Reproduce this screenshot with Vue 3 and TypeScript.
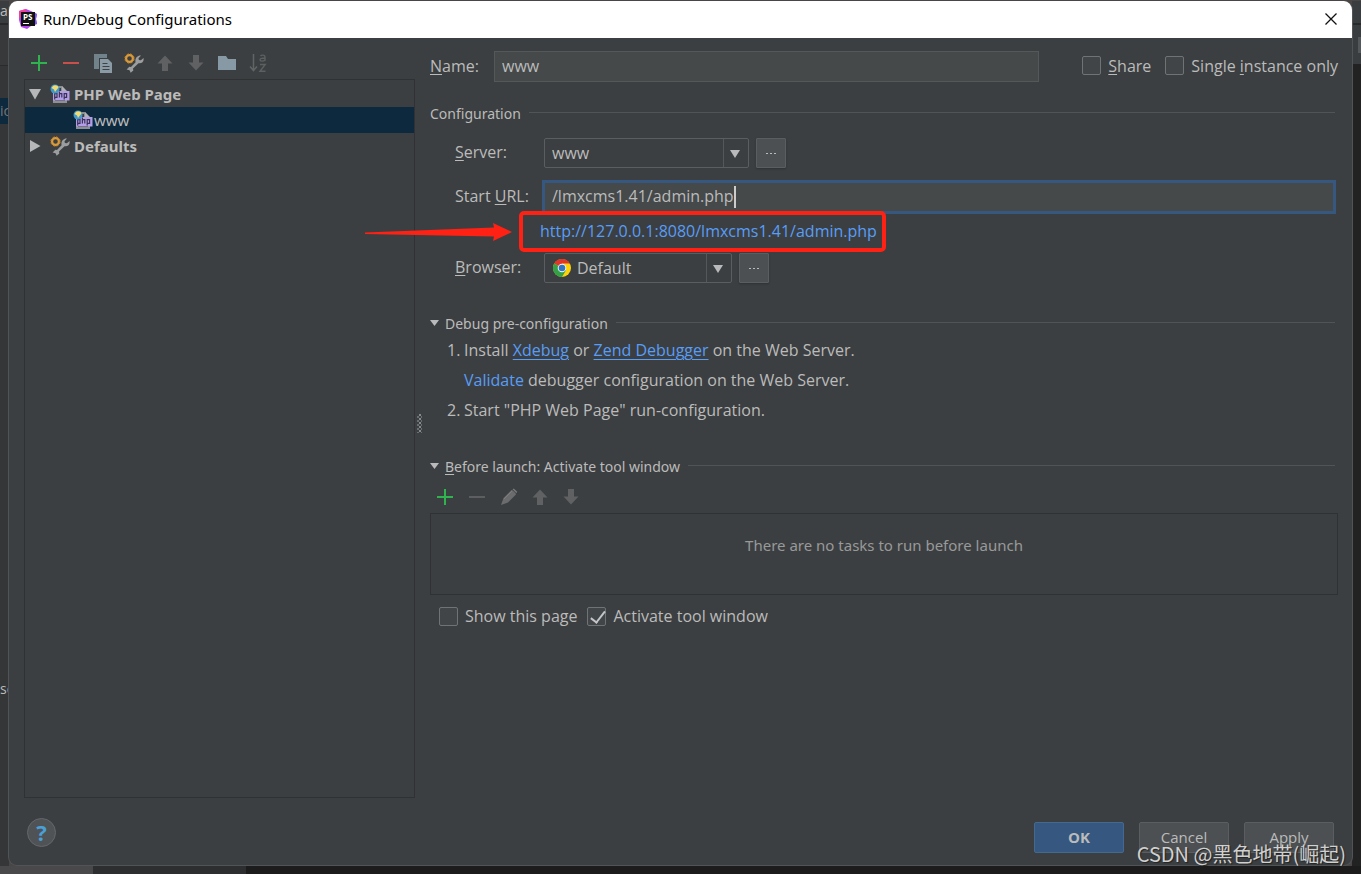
<script setup lang="ts">
import { ref } from 'vue'

type IconName =
  | 'add' | 'remove' | 'copy' | 'settings' | 'up' | 'down' | 'folder' | 'sort' | 'edit'

interface Tool { icon: IconName; label: string; disabled?: boolean }

const treeTools: Tool[] = [
  { icon: 'add', label: 'Add New Configuration' },
  { icon: 'remove', label: 'Remove Configuration' },
  { icon: 'copy', label: 'Copy Configuration' },
  { icon: 'settings', label: 'Edit Defaults' },
  { icon: 'up', label: 'Move Up', disabled: true },
  { icon: 'down', label: 'Move Down', disabled: true },
  { icon: 'folder', label: 'Create New Folder' },
  { icon: 'sort', label: 'Sort Configurations', disabled: true },
]

const taskTools: Tool[] = [
  { icon: 'add', label: 'Add Task' },
  { icon: 'remove', label: 'Remove Task', disabled: true },
  { icon: 'edit', label: 'Edit Task', disabled: true },
  { icon: 'up', label: 'Move Task Up', disabled: true },
  { icon: 'down', label: 'Move Task Down', disabled: true },
]

const name = ref('www')
const startUrl = ref('/lmxcms1.41/admin.php')
const server = ref('www')
const browser = ref('Default')
const share = ref(false)
const single = ref(false)
const showPage = ref(false)
const activate = ref(true)
</script>

<template>
  <svg class="defs" width="0" height="0" aria-hidden="true">
    <symbol id="i-add" viewBox="0 0 20 20">
      <path d="M10 2v16M2 10h16" stroke="#2fb34f" stroke-width="2" fill="none" />
    </symbol>
    <symbol id="i-remove" viewBox="0 0 20 20">
      <path d="M2 10h16" stroke="currentColor" stroke-width="2" />
    </symbol>
    <symbol id="i-copy" viewBox="0 0 20 20">
      <path d="M1 1h13v4H6v11H1z" fill="#71828b" />
      <path d="M7 6h8l4 4v10H7z" fill="#8a9ba5" />
      <path d="M9.500 10.500h5M9.500 13.500h7M9.500 16.500h7" stroke="#3c4245" stroke-width="1" />
    </symbol>
    <symbol id="i-settings" viewBox="0 0 20 20">
      <path d="M17 2.500l-2.500 2.700.4 1.800 2 .3 2.600-2.400c.8 3.500-1.700 6-5 5.300L9 15.500l.3 2-2.600 2.300-1.200-2.600L2.600 16.500 5.300 13.700l1.700.2 4.600-4.700C10.600 5.500 13.500 2 17 2.500z" fill="#9b9d9e" />
      <circle cx="5.500" cy="5.500" r="3.400" fill="none" stroke="#d99a3c" stroke-width="2.200" />
      <circle cx="5.500" cy="5.500" r="4.600" fill="none" stroke="#c98a2e" stroke-width="1" stroke-dasharray="2.400 1.210" />
    </symbol>
    <symbol id="i-up" viewBox="0 0 20 20">
      <path d="M10 2.500l7.500 8H13V18H7v-7.500H2.500z" fill="#5f6162" />
    </symbol>
    <symbol id="i-down" viewBox="0 0 20 20">
      <path d="M10 17.500l7.500-8H13V2H7v7.500H2.500z" fill="#5f6162" />
    </symbol>
    <symbol id="i-folder" viewBox="0 0 20 20">
      <path d="M1 3h8l2 3h8v11H1z" fill="#8799a4" />
    </symbol>
    <symbol id="i-sort" viewBox="0 0 20 20">
      <path d="M5.500 1v16M2 13.500L5.500 17.500 9 13.500" stroke="#616465" stroke-width="1.500" fill="none" />
      <path d="M12.500 3c1-1.300 4.500-1.300 4.500 1v4M17 5c-3 0-5 .3-5 1.800s3.500 2 5 0M12 11.500h5.200L12 18.200h5.500" stroke="#5d6061" stroke-width="1.400" fill="none" />
    </symbol>
    <symbol id="i-edit" viewBox="0 0 20 20">
      <path d="M2 18l2.500-7L12.500 3l1 .2 3.300 3.300.2 1-8 8z" fill="#6a6c6d" />
      <path d="M13.500 2.300l1.300-.8 3.400 3.200-.8 1.600z" fill="#77797a" />
      <path d="M5 12l8-8" stroke="#7c7e7f" />
    </symbol>
    <symbol id="i-php" viewBox="0 0 20 20">
      <path d="M3 2h9l5 5v12H3z" fill="#8d9092" />
      <path d="M5 4h6v4h4v9H5z" fill="#3c3f41" />
      <path d="M12 2l5 5.500h-5z" fill="#b0b2b3" />
      <path d="M3 7h16.500v9.500H3z" fill="#b39ee8" />
      <path d="M4.700 15.500V9.700h2.300v3.600H4.700M9.400 7.500v6M9.400 9.700h2.400v3.800M14.200 15.500V9.700h2.400v3.600h-2.400" fill="none" stroke="#3b3355" stroke-width="1.200" />
      <circle cx="5" cy="5" r="4.500" fill="#3f9ac9" />
      <path d="M3 2c2-1.500 5-.5 5.500 1.500L6.500 6 5 8 4 5.500 1.500 4z" fill="#f1da72" />
    </symbol>
  </svg>

  <div class="screen">
    <div class="backdrop" aria-hidden="true">
      <div class="edge-left">
        <span class="bit top">a</span>
        <span class="bit selected">ic</span>
        <span class="bit low">sc</span>
      </div>
      <div class="edge-right"><span></span></div>
      <div class="edge-bottom"></div>
    </div>

    <main class="dialog">
      <header class="titlebar">
        <svg class="logo" viewBox="0 0 20 20" aria-hidden="true">
          <path d="M1 2l7-2 5 2 6 3-1 5 1 5-6 2-4 3-6-2-2-7z" fill="#b345f1" />
          <path d="M1 2l7-2 2 7-9 2z" fill="#f03e9d" />
          <path d="M14 3l5 2-1 5 1 5-5 1z" fill="#7d5cf5" />
          <rect x="3" y="3" width="14" height="14" fill="#111" />
          <text x="5" y="10.500" class="logo-text">PS</text>
          <path d="M5 14.500h6" stroke="#fff" stroke-width="1.200" />
        </svg>
        <h1>Run/Debug Configurations</h1>
        <button class="close" type="button" aria-label="Close">
          <svg viewBox="0 0 12 12"><path d="M.5.5l11 11M11.500.5l-11 11" stroke="#111" stroke-width="1.300" /></svg>
        </button>
      </header>

      <div class="body">
        <aside class="side">
          <div class="toolbar">
            <button v-for="t in treeTools" :key="t.icon" type="button" class="tool" :class="t.icon" :aria-label="t.label" :disabled="t.disabled">
              <svg><use :href="'#i-' + t.icon" /></svg>
            </button>
          </div>
          <ul class="tree">
            <li class="node group">
              <svg class="twisty" viewBox="0 0 12 12"><path d="M0 1h12L6 11.500z" fill="#b5b7b8" /></svg>
              <svg class="glyph"><use href="#i-php" /></svg>
              <span>PHP Web Page</span>
            </li>
            <li class="node leaf">
              <svg class="glyph"><use href="#i-php" /></svg>
              <span>www</span>
            </li>
            <li class="node group">
              <svg class="twisty" viewBox="0 0 12 12"><path d="M1 0v12L11.500 6z" fill="#b5b7b8" /></svg>
              <svg class="glyph"><use href="#i-settings" /></svg>
              <span>Defaults</span>
            </li>
          </ul>
        </aside>

        <div class="splitter" aria-hidden="true"><span></span></div>

        <form class="form" @submit.prevent>
          <div class="name-row">
            <label for="name"><u>N</u>ame:</label>
            <input id="name" v-model="name" class="text-input" type="text" />
            <div class="flags">
              <label class="check"><input v-model="share" type="checkbox" /><span><u>S</u>hare</span></label>
              <label class="check"><input v-model="single" type="checkbox" /><span>Single <u>i</u>nstance only</span></label>
            </div>
          </div>

          <h2 class="section"><span>Configuration</span></h2>

          <div class="fields">
            <label class="row-server" for="server"><u>S</u>erver:</label>
            <div class="control row-server">
              <span class="combo server">
                <select id="server" v-model="server"><option>www</option></select>
                <svg class="arrow" viewBox="0 0 10 8"><path d="M0 0h10L5 8z" fill="#b8babb" /></svg>
              </span>
              <button type="button" class="more" aria-label="Browse servers"><i></i><i></i><i></i></button>
            </div>

            <label class="row-url" for="url">Start <u>U</u>RL:</label>
            <div class="url-field row-url">
              <input id="url" v-model="startUrl" type="text" /><span class="caret"></span>
            </div>

            <div class="resolved">
              <svg class="pointer" viewBox="0 0 147 18" aria-hidden="true">
                <path d="M0 9.500L129 4.500 128 0l19 9-19 9 1-4.500L0 11z" fill="#ff2114" />
              </svg>
              <a href="#">http://127.0.0.1:8080/lmxcms1.41/admin.php</a>
            </div>

            <label class="row-browser" for="browser"><u>B</u>rowser:</label>
            <div class="control row-browser">
              <span class="combo browser">
                <svg class="chrome" viewBox="0 0 18 18" aria-hidden="true">
                  <circle cx="9" cy="9" r="9" fill="#fcd20b" />
                  <path d="M9 9L1.200 4.500A9 9 0 0 1 16.800 4.500H9z" fill="#e0352b" />
                  <path d="M9 9L1.200 4.500A9 9 0 0 0 9 18l4-6.700z" fill="#35a046" />
                  <circle cx="9" cy="9" r="4.300" fill="#f2f4f5" />
                  <circle cx="9" cy="9" r="3.300" fill="#3175c2" />
                </svg>
                <select id="browser" v-model="browser"><option>Default</option></select>
                <svg class="arrow" viewBox="0 0 10 8"><path d="M0 0h10L5 8z" fill="#b8babb" /></svg>
              </span>
              <button type="button" class="more" aria-label="Configure browsers"><i></i><i></i><i></i></button>
            </div>
          </div>

          <h2 class="section fold">
            <svg class="fold-arrow" viewBox="0 0 9 6"><path d="M0 0h9L4.500 6z" fill="#b8babb" /></svg>
            <span>Debug pre-configuration</span>
          </h2>
          <ol class="steps">
            <li><span class="num">1.</span><p>Install <a href="#" class="under">Xdebug</a> or <a href="#" class="under">Zend Debugger</a> on the Web Server.</p></li>
            <li><span class="num"></span><p><a href="#">Validate</a> debugger configuration on the Web Server.</p></li>
            <li><span class="num">2.</span><p>Start "PHP Web Page" run-configuration.</p></li>
          </ol>

          <h2 class="section fold">
            <svg class="fold-arrow" viewBox="0 0 9 6"><path d="M0 0h9L4.500 6z" fill="#b8babb" /></svg>
            <span><u>B</u>efore launch: Activate tool window</span>
          </h2>
          <div class="toolbar tasks">
            <button v-for="t in taskTools" :key="t.icon" type="button" class="tool" :class="t.icon" :aria-label="t.label" :disabled="t.disabled">
              <svg><use :href="'#i-' + t.icon" /></svg>
            </button>
          </div>
          <div class="task-list">There are no tasks to run before launch</div>
          <div class="options">
            <label class="check"><input v-model="showPage" type="checkbox" /><span>Show this page</span></label>
            <label class="check"><input v-model="activate" type="checkbox" /><span>Activate tool window</span></label>
          </div>
        </form>
      </div>

      <footer class="footer">
        <button type="button" class="help" aria-label="Help">?</button>
        <button type="button" class="btn primary">OK</button>
        <button type="button" class="btn">Cancel</button>
        <button type="button" class="btn">Apply</button>
      </footer>
    </main>
    <div class="watermark">CSDN @黑色地带(崛起)</div>
  </div>
</template>

<style>
body { margin: 0; background: #222; }
</style>

<style scoped>
* { box-sizing: border-box; }
.defs { position: absolute; }
.screen {
  position: relative;
  display: flex;
  min-height: 100vh;
  padding: 1px 8px 8px;
  background: #222;
  color: #bbb;
  font: 16px/20px "Open Sans", "Noto Sans CJK SC", sans-serif;
  overflow: hidden;
}
button, input, select { font: inherit; color: inherit; margin: 0; }
h1, h2, p, ul, ol { margin: 0; padding: 0; font-weight: 400; list-style: none; }
u { text-underline-offset: 2px; text-decoration-thickness: 1px; }
a { color: #589df6; text-decoration: none; }
a.under { text-decoration: underline; text-underline-offset: 3px; }

.backdrop { position: absolute; inset: 0; background: #4a4646; }
.edge-left { position: absolute; inset: 1px auto 8px 0; width: 9px; background: linear-gradient(#3a3d3f 0 22px, #292929 22px 24px, #37393b 24px 64px, #292b2c 64px 65px, #343638 65px); }
.bit { position: absolute; left: 0; font-size: 14px; line-height: 26px; white-space: nowrap; }
.bit.top { top: -3px; }
.bit.selected { top: 97px; background: #0d293e; color: #777; }
.bit.low { top: 675px; }
.edge-right { position: absolute; inset: 1px 0 0 auto; width: 9px; background: linear-gradient(#3a3d3f 0 22px, #292929 22px 24px, #3a3d3f 24px 63px, #222 63px); }
.edge-right span { position: absolute; right: 0; top: 36px; width: 3px; height: 16px; background: #55585a; }
.edge-bottom { position: absolute; inset: auto 0 0 0; height: 8px; background: linear-gradient(90deg, #49494b 0 93px, #2c2e30 93px 246px, #1c1c1c 246px); }

.dialog {
  position: relative;
  flex: 1;
  min-width: 0;
  display: flex;
  flex-direction: column;
  border: 1px solid #515456;
  border-top: 0;
  border-radius: 9px;
  background: #3c3f41;
  overflow: hidden;
}
.titlebar { display: flex; align-items: center; height: 37px; padding: 0 14px 1px 9px; background: #fff; color: #000; }
.logo { width: 20px; height: 20px; margin-right: 5px; }
.logo-text { font: bold 8px "Open Sans", sans-serif; fill: #fff; }
h1 { flex: 1; font: 15px/20px "Noto Sans", sans-serif; }
.close { display: flex; width: 14px; height: 14px; padding: 1px; border: 0; background: none; }
.close svg { width: 12px; height: 12px; }

.body { flex: 1; display: flex; min-height: 0; padding: 8px 14px 0 15px; }
.side { width: 391px; display: flex; flex-direction: column; }
.toolbar { display: flex; align-items: center; height: 33px; padding-left: 5px; gap: 11px; }
.tool { display: flex; width: 20px; height: 20px; padding: 0; border: 0; background: none; color: #5c5e5f; }
.tool svg { width: 20px; height: 20px; }
.tool.add, .tool.remove { margin-right: 1px; }
.side .remove { color: #c9504a; }
.tree { flex: 1; border: 1px solid #2f3133; font: 15px/20px "Noto Sans", sans-serif; }
.node { display: flex; align-items: center; height: 26px; }
.group { padding-left: 4px; font-weight: 700; }
.group:first-child { height: 27px; }
.leaf { padding-left: 48px; background: #0d293e; }
.twisty { width: 12px; height: 12px; margin-right: 9px; }
.glyph { width: 20px; height: 20px; margin-right: 4px; }
.leaf .glyph { margin-right: 1px; }

.splitter { width: 15px; display: flex; padding: 368px 0 0 2px; }
.splitter span { width: 5px; height: 19px; background: conic-gradient(#9a9c9d 25%, transparent 0 50%, #77797a 0 75%, transparent 0) 0 0 / 4px 4px; opacity: .8; }

.form { flex: 1; min-width: 0; display: flex; flex-direction: column; padding-top: 5px; }
.name-row { display: flex; align-items: center; height: 31px; }
.name-row > label { width: 64px; }
.name-row label, .fields > label { padding-bottom: 2px; }
.text-input { flex: 1; min-width: 0; height: 31px; padding: 0 7px 2px; border: 1px solid #555859; background: #45494a; outline: 0; }
.flags { display: flex; gap: 14px; margin-left: 43px; }
.check { display: flex; align-items: center; gap: 7px; white-space: nowrap; }
.check input { appearance: none; position: relative; width: 19px; height: 19px; border: 1px solid #707374; border-radius: 2px; background: #414547; }
.check input:checked::after { content: ""; position: absolute; left: 6px; top: 0; width: 6px; height: 13px; border: solid #c3c5c6; border-width: 0 2px 2px 0; transform: rotate(38deg); }

.section { display: flex; align-items: center; height: 20px; font: 14px/20px "Noto Sans", sans-serif; white-space: nowrap; margin-right: 3px; }
.section::after { content: ""; flex: 1; height: 1px; margin: 0 0 3px 8px; background: #515455; }
.name-row + .section { margin-top: 22px; }
.fold-arrow { width: 9px; height: 6px; margin: 0 6px 2px 0; }

.fields { display: grid; grid-template-columns: 87px 1fr; grid-template-rows: 30px 12px 34px 39px 30px; align-items: center; margin: 14px 2px 0 25px; }
.row-server { grid-row: 1; }
.row-url { grid-row: 3; }
.resolved { grid-row: 4; }
.row-browser { grid-row: 5; }
.control { display: flex; gap: 7px; padding-left: 2px; }
.combo { position: relative; display: flex; height: 30px; }
.combo.server { width: 205px; }
.combo.browser { width: 188px; }
.combo select { width: 100%; height: 30px; padding: 0 7px; appearance: none; border: 1px solid #5b5e60; border-radius: 2px; background: #3c3f41; outline: 0; }
.combo.browser select { padding-left: 32px; }
.combo::after { content: ""; position: absolute; right: 25px; top: 1px; bottom: 1px; width: 1px; background: #55585a; }
.arrow { position: absolute; right: 9px; top: 12px; width: 10px; height: 8px; pointer-events: none; }
.chrome { position: absolute; left: 9px; top: 6px; width: 18px; height: 18px; }
.more { display: flex; align-items: center; justify-content: center; gap: 2px; width: 30px; height: 30px; padding: 0; border: 1px solid #5b5e60; border-radius: 1px; background: #4c5052; box-shadow: 0 1px 2px #303335; }
.more i { width: 2px; height: 1px; background: #bbb; }
.url-field { display: flex; align-items: center; height: 34px; padding-left: 7px; border: 3px solid #365880; background: #45494a; }
.url-field input { field-sizing: content; height: 26px; padding: 0 0 2px; border: 0; background: none; outline: 0; caret-color: transparent; }
.caret { width: 2px; height: 22px; background: #ccc; }
.resolved { position: relative; grid-column: 1 / -1; justify-self: start; display: flex; align-items: center; height: 41px; margin: -5px 0 0 64px; padding: 0 5px 0 17px; border: 4px solid #ff2114; border-radius: 5px; white-space: nowrap; z-index: 1; }
.pointer { position: absolute; right: 100%; top: 8px; width: 147px; height: 18px; margin-right: 11px; }

.fields + .section { margin-top: 31px; }
.steps { margin: 1px 0 0 17px; }
.steps li { display: flex; height: 30px; line-height: 30px; }
.num { width: 17px; }
.steps + .section { margin-top: 32px; }
.tasks { height: 36px; padding-top: 3px; }
.task-list { height: 82px; padding-top: 21px; border: 1px solid #2f3133; color: #999; font: 15px/20px "Noto Sans", sans-serif; text-align: center; }
.options { display: flex; gap: 10px; height: 42px; padding-left: 9px; }

.footer { display: flex; align-items: center; justify-content: flex-end; gap: 15px; height: 67px; padding: 11px 18px 0 18px; font-size: 15px; }
.help { width: 29px; height: 29px; margin: 0 auto 10px 0; padding: 0; border: 1px solid #65686a; border-radius: 50%; background: #4f5355; color: #4a9fd6; font-weight: 700; font-size: 22px; line-height: 26px; }
.btn { width: 90px; height: 31px; padding: 0; border: 1px solid #5b5e60; border-radius: 2px; background: #4c5052; }
.primary { background: #365880; border-color: #43698e; font-weight: 700; }
.watermark { position: absolute; right: 15px; bottom: 6px; color: #d0d0d0; font: 20px/28px "Noto Sans CJK SC", sans-serif; text-shadow: 1px 1px 1px #222; white-space: nowrap; pointer-events: none; }
</style>
